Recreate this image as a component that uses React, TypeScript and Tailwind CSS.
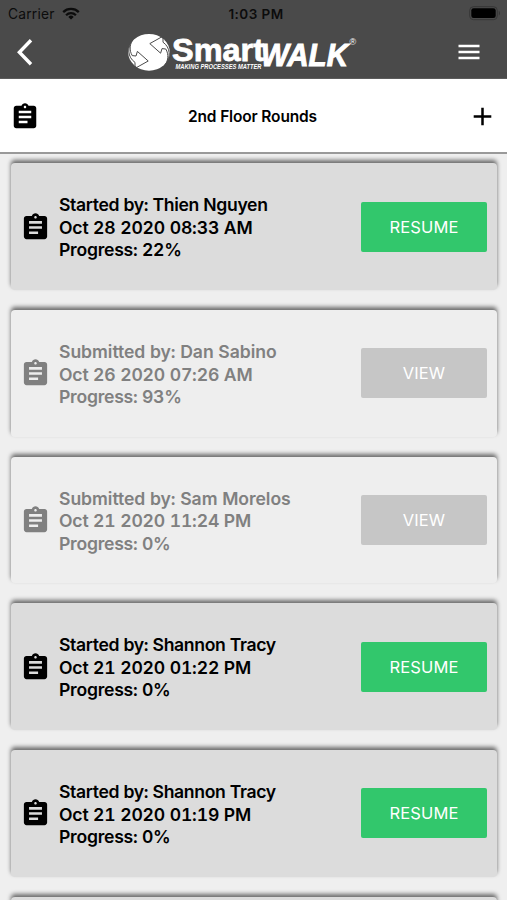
import { MdAssignment } from "react-icons/md";

type Round = {
  label: string;
  person: string;
  date: string;
  progress: number;
  open: boolean;
};

const ROUNDS: Round[] = [
  { label: "Started by", person: "Thien Nguyen", date: "Oct 28 2020 08:33 AM", progress: 22, open: true },
  { label: "Submitted by", person: "Dan Sabino", date: "Oct 26 2020 07:26 AM", progress: 93, open: false },
  { label: "Submitted by", person: "Sam Morelos", date: "Oct 21 2020 11:24 PM", progress: 0, open: false },
  { label: "Started by", person: "Shannon Tracy", date: "Oct 21 2020 01:22 PM", progress: 0, open: true },
  { label: "Started by", person: "Shannon Tracy", date: "Oct 21 2020 01:19 PM", progress: 0, open: true },
];

function StatusBar() {
  return (
    <div className="flex h-7 items-center justify-between pl-2 pr-[6px] font-['Inter',sans-serif] text-[14px] text-[#0c0c0c]">
      <div className="flex w-40 items-center gap-[7px]">
        <span className="text-[13.8px] tracking-[0.2px]">Carrier</span>
        <svg width="18" height="13" viewBox="0 0 18 13" fill="none" stroke="#0c0c0c" strokeWidth="2.3" className="-mt-[2px]">
          <path d="M1.2 5.1a11.2 11.2 0 0 1 15.6 0" />
          <path d="M4.1 8.2a7 7 0 0 1 9.8 0" />
          <path d="M9 12.6 6.3 9.9a3.9 3.9 0 0 1 5.4 0Z" fill="#0c0c0c" stroke="none" />
        </svg>
      </div>
      <span className="pl-[3px] text-[13.5px] font-semibold tracking-[0.45px]">1:03 PM</span>
      <div className="flex w-40 justify-end">
        <svg width="32" height="15" viewBox="0 0 32 15" className="-mt-[2px]">
          <rect x="0.7" y="0.7" width="27.6" height="13" rx="3.8" fill="none" stroke="#363636" />
          <rect x="2.3" y="2.3" width="24.4" height="9.8" rx="2.3" fill="#000" />
          <path d="M29.8 5v4.4c1.6-.6 1.6-3.8 0-4.4Z" fill="#363636" />
        </svg>
      </div>
    </div>
  );
}

function LogoArrow() {
  return <path d="M38 38.5C42.5 33 43 26.5 39.8 21L36 20.6 34.6 25.2 23.8 15.6 37 8.2 37 14.2C44.5 19.5 45 29 39.6 36.8" />;
}

function Logo() {
  return (
    <svg width="234" height="43" viewBox="0 0 234 43" className="shrink-0 overflow-visible font-['Liberation_Sans',Arial,sans-serif] font-bold">
      <ellipse cx="23" cy="24.3" rx="20.8" ry="18.4" fill="#fff" />
      <g fill="none" stroke="#4a4a4a" strokeWidth="1">
        <LogoArrow />
        <g transform="rotate(180 23 24.3)">
          <LogoArrow />
        </g>
      </g>
      <g fill="#fff">
        <text x="46" y="33.3" fontSize="32" stroke="#fff" strokeWidth="0.8" textLength="92" lengthAdjust="spacingAndGlyphs">
          Smart
        </text>
        <text x="135" y="38.3" fontStyle="italic" fontSize="31" stroke="#fff" strokeWidth="1" textLength="87" lengthAdjust="spacingAndGlyphs">
          WALK
        </text>
        <text x="49.5" y="40.9" fontStyle="italic" fontSize="6.4" textLength="86" lengthAdjust="spacingAndGlyphs">
          MAKING PROCESSES MATTER
        </text>
        <text x="223.5" y="16.5" fontSize="9" fontWeight="400">
          ®
        </text>
      </g>
    </svg>
  );
}

function TopBar() {
  return (
    <header className="h-[79px] border-b border-[#5c5c5c] bg-[#4a4a4a]">
      <StatusBar />
      <div className="flex h-12 items-center pl-4 pr-[27px]">
        <button aria-label="Back" className="w-[110px]">
          <svg width="18" height="28" viewBox="0 0 18 28" fill="none" stroke="#fff" strokeWidth="3.4">
            <path d="M15 2.2 3.4 14.2 15 26.2" />
          </svg>
        </button>
        <div className="flex-1 pb-[5px]">
          <Logo />
        </div>
        <button aria-label="Menu">
          <svg width="22" height="16" viewBox="0 0 22 16" stroke="#fff" strokeWidth="2.5">
            <path d="M0.5 2h21M0.5 8h21M0.5 14h21" />
          </svg>
        </button>
      </div>
    </header>
  );
}

function TitleBar() {
  return (
    <div className="flex h-[75px] items-center justify-between border-b-2 border-[#999] bg-white pl-[10px] pr-[15px] pt-[2px]">
      <MdAssignment size={30} />
      <h1 className="pl-[3px] text-[15.5px] font-semibold tracking-[-0.15px]">2nd Floor Rounds</h1>
      <button aria-label="Add round" className="flex w-[30px] justify-end">
        <svg width="19" height="19" viewBox="0 0 19 19" stroke="#000" strokeWidth="2.5">
          <path d="M9.5 0.7v17.6M0.7 9.5h17.6" />
        </svg>
      </button>
    </div>
  );
}

function RoundCard({ round }: { round?: Round }) {
  return (
    <li
      className={`flex h-[126.7px] shrink-0 items-center rounded-[4px] pl-[9px] pr-[10px] shadow-[0_-3px_4px_rgba(0,0,0,0.55)] ${
        !round || round.open ? "bg-[#dcdcdc] text-black" : "bg-[#eee] text-[#808080]"
      }`}
    >
      {round && (
        <>
          <MdAssignment size={31} className="mt-px shrink-0" />
          <div className="ml-[8px] flex-1 whitespace-nowrap pt-[3px] text-[17.6px] font-semibold leading-[22.4px] tabular-nums">
            <p className={round.open ? "tracking-[-0.35px]" : "tracking-[-0.05px]"}>{round.label}: {round.person}</p>
            <p className="tracking-[-0.15px]">{round.date}</p>
            <p className="tracking-[-0.25px]">Progress: {round.progress}%</p>
          </div>
          <button
            className={`h-[50px] w-[126px] rounded-[2px] pt-px text-[16.5px] tracking-[0.1px] text-white ${
              round.open ? "bg-[#32c76c]" : "bg-[#c6c6c6]"
            }`}
          >
            {round.open ? "RESUME" : "VIEW"}
          </button>
        </>
      )}
    </li>
  );
}

export default function App() {
  return (
    <div className="flex h-[900px] w-[507px] flex-col overflow-hidden bg-[#efefef] font-['Inter',sans-serif]">
      <TopBar />
      <TitleBar />
      <ul className="flex flex-1 flex-col gap-5 overflow-hidden pl-[11px] pr-[10px] pt-[9.2px]">
        {ROUNDS.map((round) => (
          <RoundCard key={round.date} round={round} />
        ))}
        <RoundCard />
      </ul>
    </div>
  );
}
